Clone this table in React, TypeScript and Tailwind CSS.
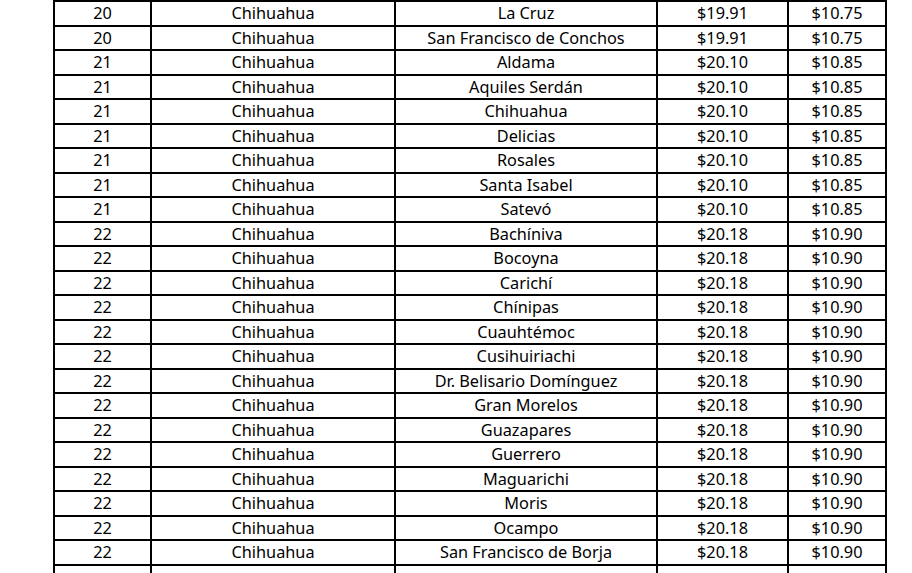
const rows: [string, string, string, string][] = [
  ['20', 'La Cruz', '$19.91', '$10.75'],
  ['20', 'San Francisco de Conchos', '$19.91', '$10.75'],
  ['21', 'Aldama', '$20.10', '$10.85'],
  ['21', 'Aquiles Serdán', '$20.10', '$10.85'],
  ['21', 'Chihuahua', '$20.10', '$10.85'],
  ['21', 'Delicias', '$20.10', '$10.85'],
  ['21', 'Rosales', '$20.10', '$10.85'],
  ['21', 'Santa Isabel', '$20.10', '$10.85'],
  ['21', 'Satevó', '$20.10', '$10.85'],
  ['22', 'Bachíniva', '$20.18', '$10.90'],
  ['22', 'Bocoyna', '$20.18', '$10.90'],
  ['22', 'Carichí', '$20.18', '$10.90'],
  ['22', 'Chínipas', '$20.18', '$10.90'],
  ['22', 'Cuauhtémoc', '$20.18', '$10.90'],
  ['22', 'Cusihuiriachi', '$20.18', '$10.90'],
  ['22', 'Dr. Belisario Domínguez', '$20.18', '$10.90'],
  ['22', 'Gran Morelos', '$20.18', '$10.90'],
  ['22', 'Guazapares', '$20.18', '$10.90'],
  ['22', 'Guerrero', '$20.18', '$10.90'],
  ['22', 'Maguarichi', '$20.18', '$10.90'],
  ['22', 'Moris', '$20.18', '$10.90'],
  ['22', 'Ocampo', '$20.18', '$10.90'],
  ['22', 'San Francisco de Borja', '$20.18', '$10.90'],
];

function Row({ cells }: { cells: string[] }) {
  return (
    <div className="flex h-[24.5px] border-b-2 border-black">
      <div className="w-[97px] border-r-2 border-black flex items-center justify-center">{cells[0]}</div>
      <div className="w-[244px] border-r-2 border-black flex items-center justify-center">{cells[1]}</div>
      <div className="w-[262px] border-r-2 border-black flex items-center justify-center">{cells[2]}</div>
      <div className="w-[131px] border-r-2 border-black flex items-center justify-center">{cells[3]}</div>
      <div className="w-[96px] flex items-center justify-center">{cells[4]}</div>
    </div>
  );
}

export default function App() {
  return (
    <div className="w-[912px] h-[573px] overflow-hidden bg-white text-black text-[16.3px] leading-none font-['Noto_Sans',sans-serif]">
      <div className="ml-[53px] w-[834px] border-2 border-b-0 border-black">
        {rows.map((r, i) => (
          <Row key={i} cells={[r[0], 'Chihuahua', r[1], r[2], r[3]]} />
        ))}
        <Row cells={['', '', '', '', '']} />
      </div>
    </div>
  );
}
